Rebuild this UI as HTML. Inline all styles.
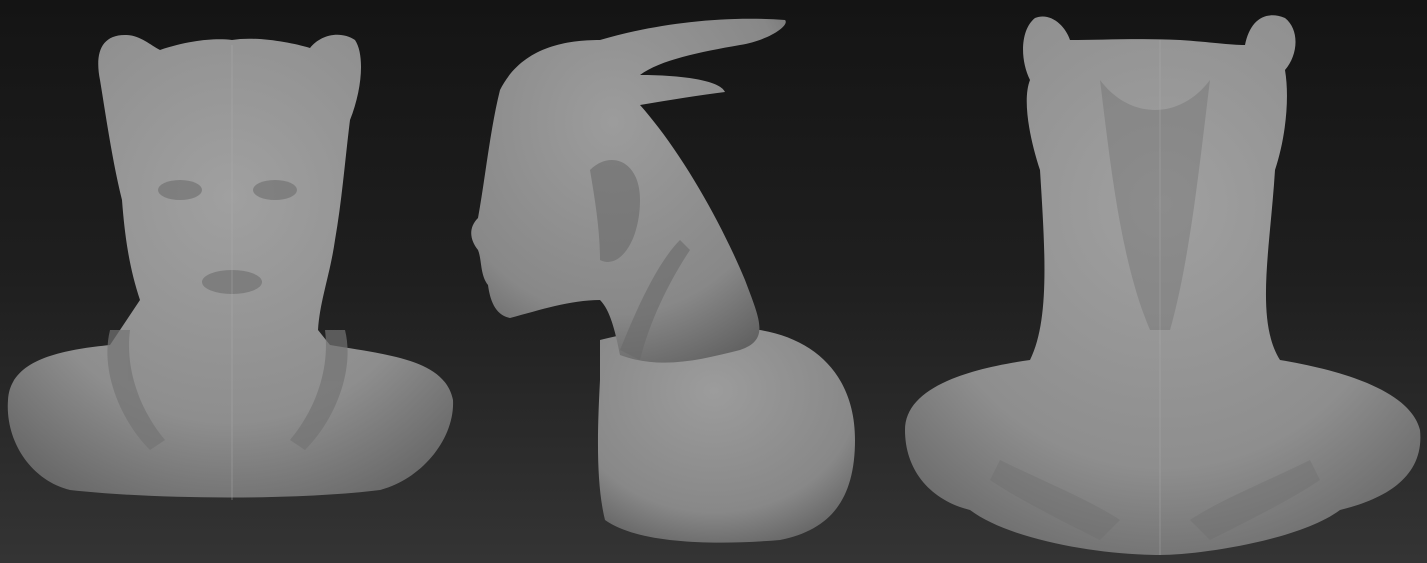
<!DOCTYPE html>
<html><head><meta charset="utf-8"><style>
html,body{margin:0;padding:0;width:1427px;height:563px;overflow:hidden;background:#222}
svg{display:block}
</style></head><body>
<svg width="1427" height="563" viewBox="0 0 1427 563" xmlns="http://www.w3.org/2000/svg">
<defs>
<linearGradient id="bg" x1="0" y1="0" x2="0" y2="1">
<stop offset="0" stop-color="#141414"/><stop offset="0.5" stop-color="#1f1f1f"/><stop offset="1" stop-color="#343434"/>
</linearGradient>
<radialGradient id="sk" cx="0.5" cy="0.35" r="0.75">
<stop offset="0" stop-color="#a0a0a0"/><stop offset="0.65" stop-color="#8e8e8e"/><stop offset="1" stop-color="#666"/>
</radialGradient>
<radialGradient id="sk2" cx="0.45" cy="0.3" r="0.8">
<stop offset="0" stop-color="#9c9c9c"/><stop offset="0.7" stop-color="#888"/><stop offset="1" stop-color="#5e5e5e"/>
</radialGradient>
</defs>
<rect width="1427" height="563" fill="url(#bg)"/>
<!-- Bust 1 front -->
<g fill="url(#sk)">
<path d="M8,400 C10,360 60,350 110,345 L140,300 C130,270 125,240 122,200 C112,160 105,110 100,80 C95,55 100,35 125,35 C140,35 150,45 160,50 C190,40 215,38 232,40 C255,36 290,42 310,48 C320,35 340,30 355,40 C365,55 362,90 350,120 C345,160 342,200 335,240 C330,275 320,300 318,330 L330,345 C390,355 445,360 453,400 C455,440 420,480 380,490 C300,500 160,500 70,490 C30,480 5,440 8,400 Z"/>
</g>
<g fill="#737373" opacity="0.7">
<ellipse cx="180" cy="190" rx="22" ry="10"/><ellipse cx="275" cy="190" rx="22" ry="10"/>
<ellipse cx="232" cy="282" rx="30" ry="12"/>
<path d="M110,330 C100,370 120,420 150,450 L165,440 C140,410 125,370 130,330 Z"/>
<path d="M345,330 C355,370 335,420 305,450 L290,440 C315,410 330,370 325,330 Z"/>
</g>
<!-- Bust 2 side -->
<g fill="url(#sk2)">
<path d="M600,340 C640,330 700,320 760,330 C820,340 855,380 855,440 C855,500 830,530 780,540 C720,545 640,545 605,520 C595,480 598,420 600,380 Z"/>
<path d="M500,90 C520,50 560,40 600,40 C650,25 720,15 785,20 C790,25 770,40 740,45 C700,52 660,60 640,75 C680,75 720,80 725,92 C700,95 670,100 640,105 C680,150 720,220 745,280 C760,320 770,340 740,350 C700,360 660,370 620,355 C615,330 610,310 600,300 C570,300 540,310 510,318 C495,315 490,300 488,285 C480,275 482,260 478,250 C470,240 468,228 478,218 C485,180 490,130 500,90 Z"/>
</g>
<g fill="#6a6a6a" opacity="0.6">
<path d="M590,170 C610,150 640,160 640,200 C640,240 620,270 600,260 C600,230 595,200 590,170 Z"/>
<path d="M620,350 C640,300 660,260 680,240 L690,250 C670,280 650,320 640,360 Z"/>
</g>
<!-- Bust 3 back -->
<g fill="url(#sk)">
<path d="M905,430 C905,390 960,370 1030,360 C1050,320 1045,250 1040,170 C1030,140 1022,100 1030,80 C1020,60 1020,30 1035,18 C1050,12 1065,25 1070,40 C1100,40 1140,38 1180,40 C1210,42 1230,45 1245,45 C1250,20 1265,10 1285,18 C1300,30 1298,55 1285,70 C1290,100 1285,140 1275,170 C1270,250 1255,320 1280,360 C1340,370 1410,390 1420,430 C1425,480 1380,500 1340,510 C1300,540 1200,555 1160,555 C1100,555 1010,540 970,510 C930,500 905,470 905,430 Z"/>
</g>
<g fill="#6e6e6e" opacity="0.4">
<path d="M1100,80 C1110,160 1120,260 1150,330 L1170,330 C1190,260 1200,160 1210,80 C1180,120 1130,120 1100,80 Z"/>
<path d="M1000,460 C1040,480 1090,500 1120,520 L1100,540 C1060,520 1020,500 990,480 Z"/>
<path d="M1310,460 C1270,480 1220,500 1190,520 L1210,540 C1250,520 1290,500 1320,480 Z"/>
</g>
<line x1="232" y1="45" x2="232" y2="500" stroke="#b0b0b0" stroke-width="1" opacity="0.4"/>
<line x1="1160" y1="40" x2="1160" y2="555" stroke="#b0b0b0" stroke-width="1" opacity="0.4"/>
</svg>
</body></html>
